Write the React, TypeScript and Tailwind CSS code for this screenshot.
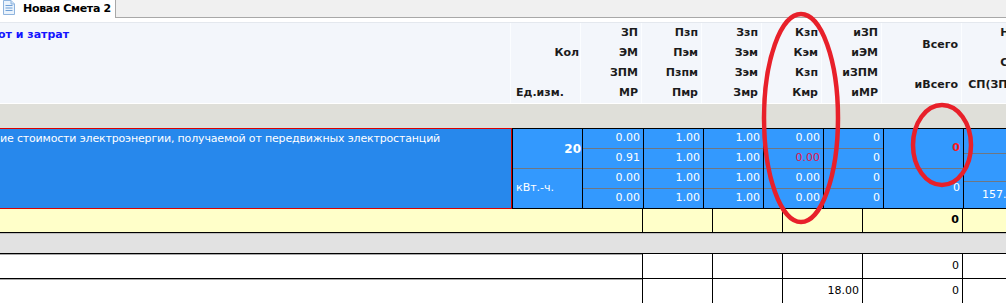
import React from "react";

const Num = ({ v, cls = "" }: { v: string; cls?: string }) => (
  <div className={"h-[20px] border-t border-[#6f7782] flex items-center justify-end pr-[3px] " + cls}>{v}</div>
);

function NumCol({ w, vals, red }: { w: string; vals: string[]; red?: number }) {
  return (
    <div className={"shrink-0 border-l border-black flex flex-col " + w}>
      <div className={"h-[19px] flex items-center justify-end pr-[3px] " + (red === 0 ? "text-[#e0164a]" : "")}>{vals[0]}</div>
      {vals.slice(1).map((v, i) => (
        <Num key={i} v={v} cls={red === i + 1 ? "text-[#e0164a]" : ""} />
      ))}
    </div>
  );
}

function HeadCol({ w, lines }: { w: string; lines: string[] }) {
  return (
    <div className={"shrink-0 border-l border-[#fbfdff] flex flex-col items-end pr-[3px] " + w}>
      {lines.map((l, i) => (
        <div key={i} className="h-[20px] leading-[20px]">{l}</div>
      ))}
    </div>
  );
}

export default function App() {
  return (
    <div className="w-[1006px] h-[303px] overflow-hidden bg-white relative font-['DejaVu_Sans',sans-serif] text-[11px]">
      {/* Tab bar */}
      <div className="flex h-[18px] bg-[#f0f0f0]">
        <div className="w-[116px] h-[18px] bg-white border-r border-[#a8a8a8] flex items-center pl-[3px] gap-[8px]">
          <svg width="12" height="15" viewBox="0 0 12 15" className="shrink-0 -mt-[3px]">
            <path d="M0.5 0.5 H8 L11.5 4 V14.5 H0.5 Z" fill="#eaf3fc" stroke="#8fb4de" />
            <path d="M8 0.5 V4 H11.5" fill="#cfe2f6" stroke="#8fb4de" />
            <line x1="2.5" y1="5.5" x2="9.5" y2="5.5" stroke="#6f9fd6" />
            <line x1="2.5" y1="8" x2="9.5" y2="8" stroke="#6f9fd6" />
            <line x1="2.5" y1="10.5" x2="9.5" y2="10.5" stroke="#6f9fd6" />
          </svg>
          <span className="font-bold text-[11px] text-black tracking-[-0.3px] whitespace-nowrap">Новая Смета 2</span>
        </div>
        <div className="flex-1 border-b border-[#a8a8a8]" />
      </div>
      <div className="h-[4px] bg-white" />
      <div className="h-[1px] bg-[#e4e8ee]" />

      {/* Header */}
      <div className="flex h-[80px] bg-[#f3f6fb] font-bold text-[#1b1b1b]">
        <div className="w-[512px] shrink-0 pt-[4px] -ml-[2px] text-[#1414ff]">от и затрат</div>
        <div className="w-[70px] shrink-0 border-l border-[#fbfdff] flex flex-col">
          <div className="h-[20px]" />
          <div className="h-[20px] leading-[20px] text-right pr-[1px]">Кол</div>
          <div className="h-[20px]" />
          <div className="h-[20px] leading-[20px] pl-[5px]">Ед.изм.</div>
        </div>
        <HeadCol w="w-[61px]" lines={["ЗП", "ЭМ", "ЗПМ", "МР"]} />
        <HeadCol w="w-[60px]" lines={["Пзп", "Пэм", "Пзпм", "Пмр"]} />
        <HeadCol w="w-[60px]" lines={["Ззп", "Зэм", "Зэм", "Змр"]} />
        <HeadCol w="w-[60px]" lines={["Кзп", "Кэм", "Кзп", "Кмр"]} />
        <HeadCol w="w-[60px]" lines={["иЗП", "иЭМ", "иЗПМ", "иМР"]} />
        <div className="w-[80px] shrink-0 border-l border-[#fbfdff] flex flex-col items-end pr-[3px]">
          <div className="h-[12px]" />
          <div className="h-[20px] leading-[20px]">Всего</div>
          <div className="h-[20px]" />
          <div className="h-[20px] leading-[20px]">иВсего</div>
        </div>
        <div className="flex-1 border-l border-[#fbfdff] overflow-hidden relative">
          <div className="absolute left-[-28px] w-[150px] top-0 flex flex-col items-center">
            <div className="h-[20px] leading-[20px]">НР</div>
            <div className="h-[10px]" />
            <div className="h-[20px] leading-[20px]">СП</div>
            <div className="h-[2px]" />
            <div className="h-[20px] leading-[20px] whitespace-nowrap">СП(ЗП+ЗПМ)</div>
          </div>
        </div>
      </div>
      <div className="h-[1px] bg-white" />

      {/* gray band */}
      <div className="h-[24px] bg-[#dfdfd9]" />
      <div className="h-[1px] bg-black" />

      {/* blue row */}
      <div className="flex h-[79px] bg-[#3399fe] text-white">
        <div className="w-[512px] shrink-0 bg-[#2788ec] border-r border-y border-[#d80000] -mt-[1px] h-[81px] pt-[2px] whitespace-nowrap overflow-hidden tracking-[-0.17px]">
          ие стоимости электроэнергии, получаемой от передвижных электростанций
        </div>
        <div className="w-[70px] shrink-0 border-l border-black flex flex-col">
          <div className="h-[39px] flex items-center justify-end pr-[1px] font-bold text-[12px]">20</div>
          <div className="h-[40px] border-t border-[#6f7782] flex items-center pl-[3px]">кВт.-ч.</div>
        </div>
        <NumCol w="w-[61px]" vals={["0.00", "0.91", "0.00", "0.00"]} />
        <NumCol w="w-[60px]" vals={["1.00", "1.00", "1.00", "1.00"]} />
        <NumCol w="w-[60px]" vals={["1.00", "1.00", "1.00", "1.00"]} />
        <NumCol w="w-[60px]" vals={["0.00", "0.00", "0.00", "0.00"]} red={1} />
        <NumCol w="w-[60px]" vals={["0", "0", "0", "0"]} />
        <div className="w-[80px] shrink-0 border-l border-black flex flex-col">
          <div className="h-[39px] flex items-center justify-end pr-[3px] font-bold text-[#ff1a1a]">0</div>
          <div className="h-[40px] border-t border-[#6f7782] flex items-center justify-end pr-[3px]">0</div>
        </div>
        <div className="flex-1 border-l border-black flex flex-col overflow-hidden">
          <div className="h-[24px]" />
          <div className="h-[28px] border-t border-[#6f7782]" />
          <div className="h-[27px] border-t border-[#6f7782] flex items-center pl-[18px] whitespace-nowrap">157.50</div>
        </div>
      </div>

      {/* yellow row */}
      <div className="flex h-[25px] bg-[#ffffc9] border-y border-black">
        <div className="w-[642px] shrink-0" />
        <div className="w-[70px] shrink-0 border-l border-black" />
        <div className="w-[70px] shrink-0 border-l border-black" />
        <div className="w-[80px] shrink-0 border-l border-black" />
        <div className="w-[100px] shrink-0 border-l border-black flex items-center justify-end pr-[3px] font-bold text-black">0</div>
        <div className="flex-1 border-l border-black" />
      </div>

      {/* gray band 2 */}
      <div className="h-[20px] bg-[#e2e2e2] border-t border-[#bdbdbd]" />
      <div className="h-[1px] bg-black" />

      {/* bottom rows */}
      {[["", "0"], ["18.00", "0"]].map((r, i) => (
        <div key={i} className="flex flex-col">
          {i === 1 && <div className="h-[1px] bg-black" />}
          <div className="flex h-[24px] bg-white text-black">
            <div className="w-[642px] shrink-0 border-t border-[#a9a9a9]" />
            <div className="w-[70px] shrink-0 border-l border-black" />
            <div className="w-[70px] shrink-0 border-l border-black" />
            <div className="w-[80px] shrink-0 border-l border-black flex items-center justify-end pr-[3px]">{r[0]}</div>
            <div className="w-[100px] shrink-0 border-l border-black flex items-center justify-end pr-[3px]">{r[1]}</div>
            <div className="flex-1 border-l border-black" />
          </div>
        </div>
      ))}

      {/* red annotation ellipses */}
      <svg className="absolute left-0 top-0 pointer-events-none" width="1006" height="303">
        <ellipse cx="801" cy="118" rx="37" ry="104" fill="none" stroke="#e8202a" strokeWidth="4.5" />
        <ellipse cx="942" cy="145" rx="29" ry="40" fill="none" stroke="#e8202a" strokeWidth="4.5" />
      </svg>
    </div>
  );
}
